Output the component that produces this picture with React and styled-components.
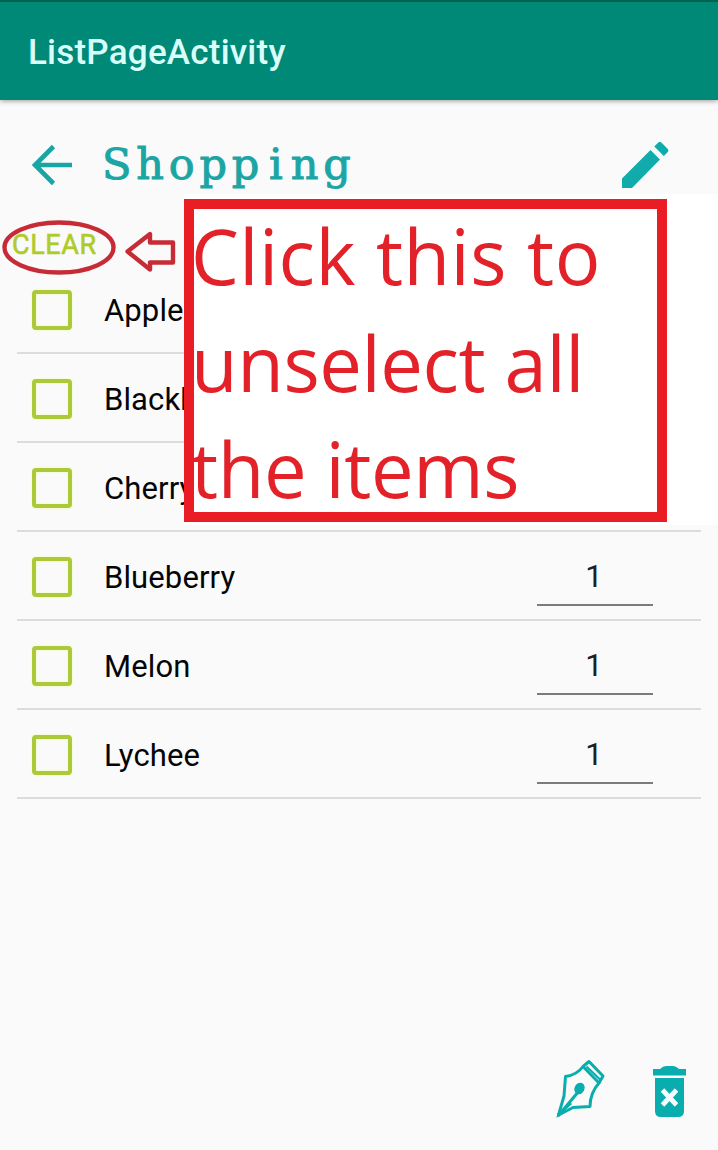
import React from "react";
import styled, { createGlobalStyle } from "styled-components";

const Global = createGlobalStyle`
  *, *::before, *::after { box-sizing: border-box; }
  body { margin: 0; background: #fafafa; font-family: Roboto, sans-serif; }
`;

const Screen = styled.main`
  position: relative;
  width: 718px;
  height: 1150px;
  overflow: hidden;
  display: flex;
  flex-direction: column;
  background: #fafafa;
`;

const AppBar = styled.header`
  flex: none;
  height: 100px;
  padding: 3px 28px 0;
  display: flex;
  align-items: center;
  background: #008977;
  border-top: 2px solid #00614f;
  box-shadow: 0 1px 5px rgba(0, 0, 0, 0.38);
`;

const AppTitle = styled.h1`
  margin: 0;
  font-size: 35px;
  line-height: 40px;
  font-weight: 500;
  letter-spacing: 0.22px;
  color: #d9fffa;
`;

const TitleRow = styled.div`
  flex: none;
  height: 120px;
  padding: 10px 49px 0 30px;
  display: flex;
  align-items: center;
`;

const ListName = styled.h2`
  flex: 1;
  margin: 0 0 2px 28px;
  font-family: "DejaVu Serif", serif;
  font-size: 43px;
  line-height: 50px;
  font-weight: 400;
  letter-spacing: 4.8px;
  color: #1ba5a4;
  -webkit-text-stroke: 1px #1ba5a4;
`;

const WideLetter = styled.span`
  margin: 0 3px 0 5px;
`;

const ClearButton = styled.button`
  flex: none;
  align-self: flex-start;
  height: 44px;
  padding: 5px 0 0 12px;
  display: flex;
  align-items: center;
  border: 0;
  background: none;
  font: 400 27px/32px Roboto, sans-serif;
  letter-spacing: 0.6px;
  color: #afcb2a;
  -webkit-text-stroke: 0.6px #afcb2a;
`;

const List = styled.ul`
  margin: 1px 17px 0;
  padding: 0;
  list-style: none;
`;

const Row = styled.li`
  height: 89px;
  padding: 4px 48px 0 15px;
  display: flex;
  align-items: center;
  border-bottom: 2px solid #dcdcdc;
`;

const Checkbox = styled.span`
  width: 40px;
  height: 40px;
  margin-bottom: 1px;
  border: 4px solid #abc938;
  border-radius: 4px;
  box-shadow: 0 0 2px #e6ff8a, inset 0 0 2px #e6ff8a;
`;

const ItemName = styled.span`
  flex: 1;
  margin-left: 32px;
  font-size: 31px;
  line-height: 36px;
  letter-spacing: 0.12px;
  color: #050505;
`;

const Quantity = styled.span`
  align-self: flex-end;
  width: 116px;
  height: 54px;
  margin-bottom: 13px;
  padding: 7px 2px 0 0;
  border-bottom: 2px solid #7b7b7b;
  text-align: center;
  font-size: 31px;
  line-height: 36px;
  color: #202020;
`;

const Actions = styled.footer`
  margin-top: auto;
  padding: 0 31px 31px 0;
  display: flex;
  justify-content: flex-end;
  align-items: flex-end;
  gap: 47px;
`;

const Callout = styled.aside`
  position: absolute;
  top: 194px;
  left: 184px;
  width: 534px;
  height: 331px;
  padding-top: 5px;
  background: #fff;
`;

const CalloutBox = styled.div`
  width: 483px;
  height: 323px;
  border: 10px solid #ea1c24;
`;

const CalloutText = styled.p`
  margin: -6px 0 0 -3px;
  font-family: "Open Sans", "Noto Sans", sans-serif;
  font-size: 76px;
  line-height: 106.5px;
  white-space: nowrap;
  color: #e32129;
`;

const CalloutLine = styled.span`
  display: block;
  letter-spacing: ${(p) => p.$tracking}px;
`;

const Marks = styled.svg`
  position: absolute;
  top: 214px;
  left: 0;
`;

const items = [
  { name: "Apple" },
  { name: "Blackb" },
  { name: "Cherry" },
  { name: "Blueberry", quantity: 1 },
  { name: "Melon", quantity: 1 },
  { name: "Lychee", quantity: 1 },
];

const BackIcon = () => (
  <svg width="44" height="44" viewBox="0 0 44 44" fill="none" stroke="#18a5a4" strokeWidth="4.6">
    <path d="M42 22H5M23.5 3.5 5 22l18.5 18.5" />
  </svg>
);

const PencilIcon = () => (
  <svg width="47" height="47" viewBox="0 0 47 47" fill="#12abab">
    <path d="M0 36.5 28.5 8l9.5 9.500L10 46H0zM32.3 4.500l3.700-3.700q1.800-1.800 3.600 0l5.700 5.700q2 2 .2 3.800l-3.700 3.700z" />
  </svg>
);

const NibIcon = () => (
  <svg width="50" height="60" viewBox="0 0 50 60" fill="none" stroke="#0aadae" strokeWidth="3" strokeLinejoin="round">
    <path d="M3.5 56 9 37 10.5 17.5Q22 16 28 7.500L44 24Q35 34 35 47.500L18 48.500Z" />
    <path d="M28 7.500 34 2.500 48 17 44 24" />
    <path d="M31.500 7.500 45.500 21" strokeWidth="2.200" />
    <path d="M3 57 24 32M3 56 16 44" />
    <ellipse cx="24.500" cy="29.500" rx="3.500" ry="4.500" fill="#0aadae" transform="rotate(25 24.500 29.500)" />
    <path d="M1 59 5 50 10 53Z" fill="#0aadae" stroke="none" />
  </svg>
);

const TrashIcon = () => (
  <svg width="35" height="54" viewBox="0 0 35 54">
    <path fill="#0aadae" d="M1 4H8Q11 1 14 1H21Q24 1 27 4H34V10.500H1ZM3 13H32V46Q32 52 26 52H9Q3 52 3 46Z" />
    <path d="m10.500 25 14 15M24.500 25 10.500 40" stroke="#f7fbfb" strokeWidth="4.800" />
  </svg>
);

export default function App() {
  return (
    <Screen>
      <Global />
      <AppBar>
        <AppTitle>ListPageActivity</AppTitle>
      </AppBar>
      <TitleRow>
        <BackIcon />
        <ListName>
          Shopp<WideLetter>i</WideLetter>ng
        </ListName>
        <PencilIcon />
      </TitleRow>
      <ClearButton>CLEAR</ClearButton>
      <List>
        {items.map(({ name, quantity }) => (
          <Row key={name}>
            <Checkbox />
            <ItemName>{name}</ItemName>
            {quantity && <Quantity>{quantity}</Quantity>}
          </Row>
        ))}
      </List>
      <Actions>
        <NibIcon />
        <TrashIcon />
      </Actions>
      <Marks width="184" height="66" fill="none" stroke="#c62b36" strokeWidth="4.4">
        <ellipse cx="59" cy="33.5" rx="54.5" ry="25" />
        <path d="M127.5 37.5 150 20V28.5H173V48.5H150V55.5Z" strokeLinejoin="round" />
      </Marks>
      <Callout>
        <CalloutBox>
          <CalloutText>
            <CalloutLine $tracking={0.45}>Click this to</CalloutLine>
            <CalloutLine $tracking={-0.4}>unselect all</CalloutLine>
            <CalloutLine $tracking={-0.4}>the items</CalloutLine>
          </CalloutText>
        </CalloutBox>
      </Callout>
    </Screen>
  );
}
